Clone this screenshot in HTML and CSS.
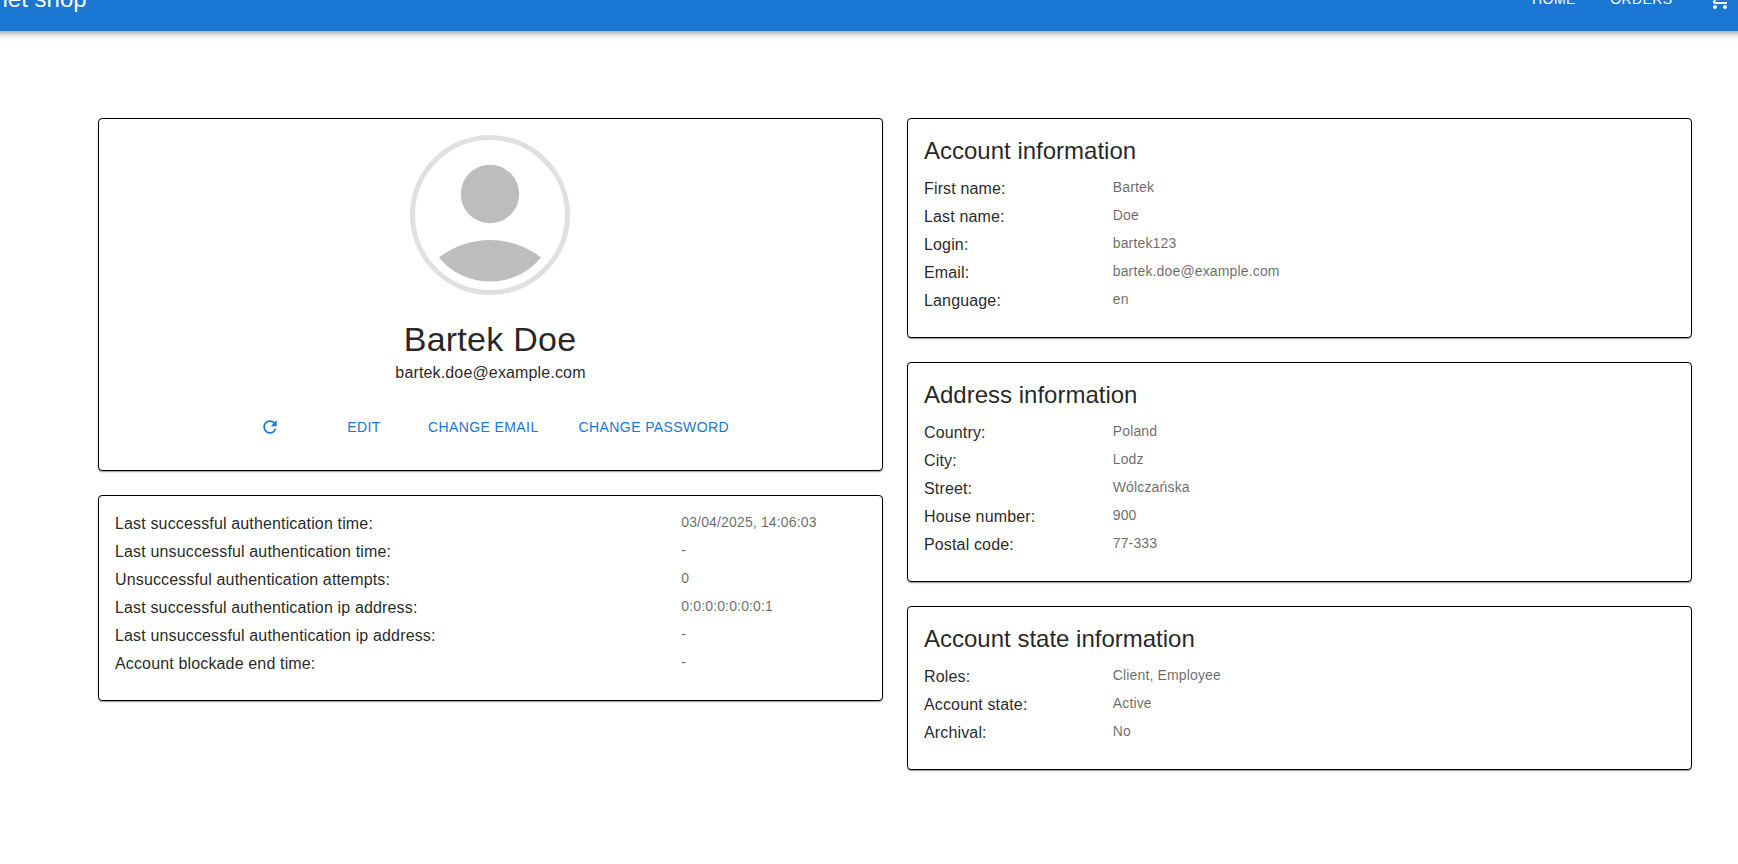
FILE: index.html
```html
<!DOCTYPE html>
<html lang="en">
<head>
<meta charset="utf-8">
<title>Internet shop</title>
<link rel="stylesheet" href="styles.css">
</head>
<body>
<header class="appbar">
  <div class="brand">Internet shop</div>
  <nav class="nav">
    <a class="nav-link">Home</a>
    <a class="nav-link">Orders</a>
    <svg class="cart" viewBox="0 0 24 24"><path d="M15.55 13c.75 0 1.41-.41 1.75-1.03l3.58-6.49c.37-.66-.11-1.48-.87-1.48H5.21l-.94-2H1v2h2l3.6 7.59-1.35 2.44C4.52 15.37 5.48 17 7 17h12v-2H7l1.1-2h7.45zM6.16 6h12.15l-2.76 5H8.53L6.16 6zM7 18c-1.1 0-1.99.9-1.99 2S5.9 22 7 22s2-.9 2-2-.9-2-2-2zm10 0c-1.1 0-1.99.9-1.99 2s.89 2 1.99 2 2-.9 2-2-.9-2-2-2z"/></svg>
  </nav>
</header>
<main class="page">
  <div class="column">
    <section class="card profile">
      <svg class="avatar" viewBox="0 0 160 160">
        <circle class="avatar-ring" cx="80" cy="80" r="77.5"/>
        <circle class="avatar-person" cx="80" cy="59" r="29.2"/>
        <path class="avatar-person" d="M29 122.5A83 83 0 0 1 131 122.5A66 66 0 0 1 29 122.5Z"/>
      </svg>
      <h1 class="name">Bartek Doe</h1>
      <p class="mail">bartek.doe@example.com</p>
      <div class="actions">
        <button class="btn refresh" aria-label="Refresh"><svg class="refresh-icon" viewBox="0 0 24 24"><path d="M17.65 6.35C16.2 4.9 14.21 4 12 4c-4.42 0-7.99 3.58-7.99 8s3.57 8 7.99 8c3.73 0 6.84-2.55 7.73-6h-2.08c-.82 2.33-3.04 4-5.65 4-3.31 0-6-2.69-6-6s2.69-6 6-6c1.66 0 3.14.69 4.22 1.78L13 11h7V4l-2.35 2.35z"/></svg></button>
        <button class="btn">Edit</button>
        <button class="btn">Change email</button>
        <button class="btn">Change password</button>
      </div>
    </section>
    <section class="card">
      <dl class="rows wide">
        <dt>Last successful authentication time:</dt><dd>03/04/2025, 14:06:03</dd>
        <dt>Last unsuccessful authentication time:</dt><dd>-</dd>
        <dt>Unsuccessful authentication attempts:</dt><dd>0</dd>
        <dt>Last successful authentication ip address:</dt><dd>0:0:0:0:0:0:0:1</dd>
        <dt>Last unsuccessful authentication ip address:</dt><dd>-</dd>
        <dt>Account blockade end time:</dt><dd>-</dd>
      </dl>
    </section>
  </div>
  <div class="column">
    <section class="card">
      <h2 class="heading">Account information</h2>
      <dl class="rows">
        <dt>First name:</dt><dd>Bartek</dd>
        <dt>Last name:</dt><dd>Doe</dd>
        <dt>Login:</dt><dd>bartek123</dd>
        <dt>Email:</dt><dd>bartek.doe@example.com</dd>
        <dt>Language:</dt><dd>en</dd>
      </dl>
    </section>
    <section class="card">
      <h2 class="heading">Address information</h2>
      <dl class="rows">
        <dt>Country:</dt><dd>Poland</dd>
        <dt>City:</dt><dd>Lodz</dd>
        <dt>Street:</dt><dd>Wólczańska</dd>
        <dt>House number:</dt><dd>900</dd>
        <dt>Postal code:</dt><dd>77-333</dd>
      </dl>
    </section>
    <section class="card">
      <h2 class="heading">Account state information</h2>
      <dl class="rows">
        <dt>Roles:</dt><dd>Client, Employee</dd>
        <dt>Account state:</dt><dd>Active</dd>
        <dt>Archival:</dt><dd>No</dd>
      </dl>
    </section>
  </div>
</main>
</body>
</html>
```
FILE: styles.css
```css
* { box-sizing: border-box; }
html { background: #fff; }
body {
  margin: 0;
  height: 864px;
  overflow: hidden;
  background: #fff;
  color: rgba(0, 0, 0, 0.87);
  font-family: "Liberation Sans", Arial, sans-serif;
  font-size: 16px;
  line-height: 24px;
  letter-spacing: 0.00938em;
}
h1, h2, p, dl, dd { margin: 0; font-weight: 400; }

.appbar {
  display: flex;
  justify-content: space-between;
  align-items: center;
  height: 64px;
  margin: -33px -16px 0;
  padding: 0 22px 0 16px;
  background: #1976d2;
  color: #fff;
  box-shadow: 0 2px 4px -1px rgba(0,0,0,.2), 0 4px 5px 0 rgba(0,0,0,.14), 0 1px 10px 0 rgba(0,0,0,.12);
}
.brand { margin-left: -53.5px; font-size: 24px; line-height: 32px; letter-spacing: 0; }
.nav { display: flex; align-items: center; gap: 34.5px; }
.nav-link {
  font-size: 14px;
  line-height: 24.5px;
  letter-spacing: 0.02857em;
  text-transform: uppercase;
}
.cart { width: 24px; height: 24px; margin-left: 1px; fill: #fff; }

.page {
  display: grid;
  grid-template-columns: 785px 785px;
  gap: 24px;
  padding: 87px 0 0 98px;
}
.column { display: flex; flex-direction: column; gap: 24px; }
.card {
  padding: 16px 16px 24px;
  border: 1px solid #000;
  border-radius: 4px;
  background: #fff;
  box-shadow: 0 2px 1px -1px rgba(0,0,0,.2), 0 1px 1px 0 rgba(0,0,0,.14), 0 1px 3px 0 rgba(0,0,0,.12);
}

.profile { display: flex; flex-direction: column; align-items: center; height: 353px; }
.avatar { width: 160px; height: 160px; margin-right: 1px; }
.avatar-ring { fill: #fff; stroke: #e0e0e0; stroke-width: 5; }
.avatar-person { fill: #bdbdbd; }
.name { margin: 23px 1px 1px 0; font-size: 34px; line-height: 42px; letter-spacing: 0.00735em; }
.actions { display: flex; gap: 24px; margin: 24px 6px 0 0; }
.btn {
  min-width: 64px;
  padding: 6px 8px;
  border: 0;
  background: none;
  color: #1976d2;
  font: 14px/24.5px "Liberation Sans", Arial, sans-serif;
  letter-spacing: 0.02857em;
  text-transform: uppercase;
}
.refresh { display: flex; justify-content: center; align-items: center; margin-right: 6px; }
.refresh-icon { width: 20px; height: 20px; fill: #1976d2; }

.heading { margin-bottom: 10px; font-size: 24px; line-height: 32px; letter-spacing: 0; }
.rows {
  display: grid;
  grid-template-columns: 188.75px 1fr;
  grid-auto-rows: 24px;
  row-gap: 4px;
}
.rows.wide { grid-template-columns: 566.25px 1fr; }
.rows dd {
  color: rgba(0, 0, 0, 0.6);
  font-size: 14px;
  line-height: 20px;
  letter-spacing: 0.01071em;
}
```
